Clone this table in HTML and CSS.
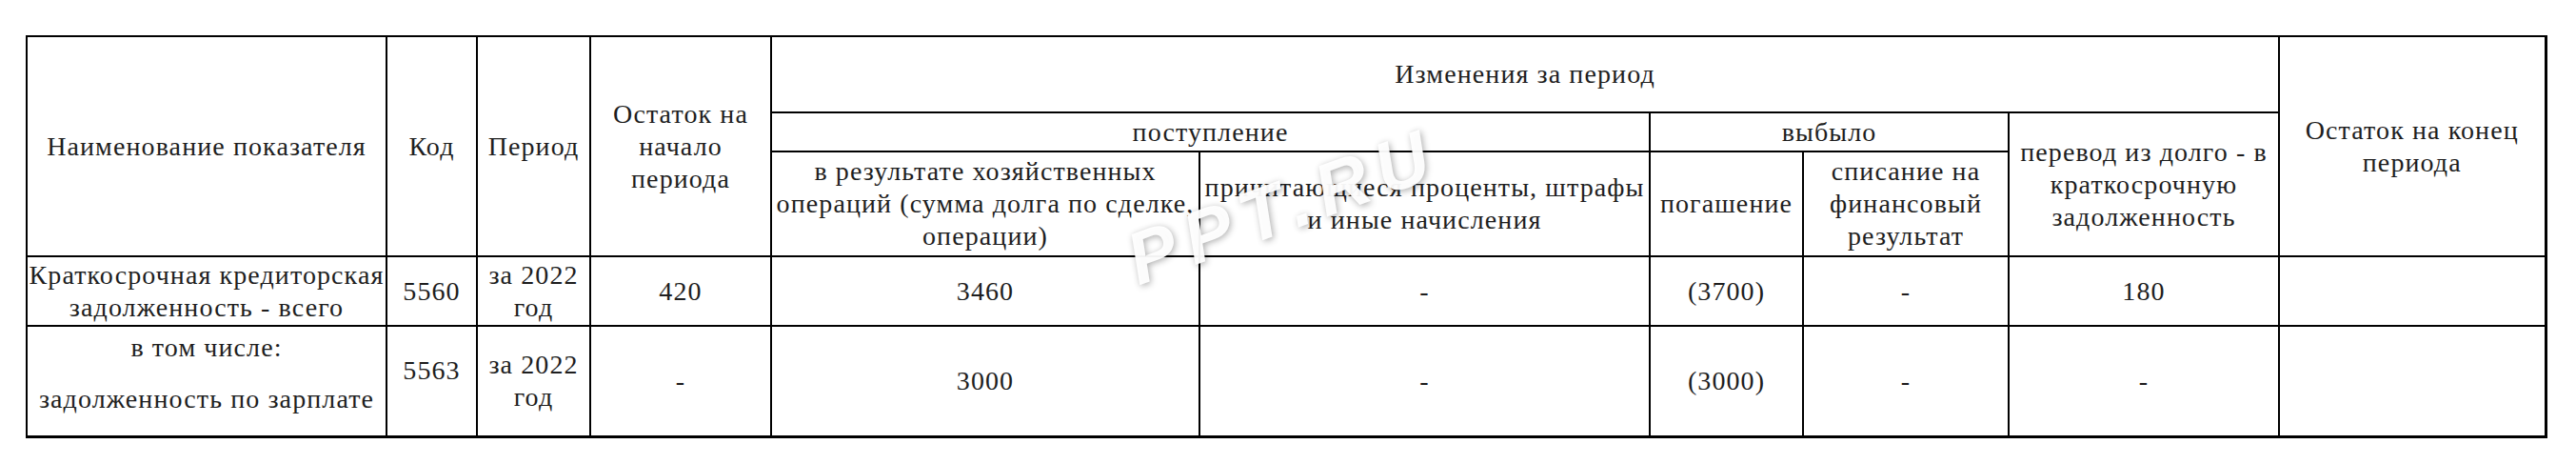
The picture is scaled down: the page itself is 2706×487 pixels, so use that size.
FILE: index.html
```html
<!DOCTYPE html>
<html lang="ru">
<head>
<meta charset="utf-8">
<link rel="stylesheet" href="styles.css">
</head>
<body>
<div class="page">
  <table class="report">
    <colgroup>
      <col class="c-name"><col class="c-code"><col class="c-period"><col class="c-start">
      <col class="c-ops"><col class="c-fines"><col class="c-repay"><col class="c-write">
      <col class="c-move"><col class="c-end">
    </colgroup>
    <thead>
      <tr class="h1">
        <th rowspan="3">Наименование показателя</th>
        <th rowspan="3">Код</th>
        <th rowspan="3">Период</th>
        <th rowspan="3">Остаток на<br>начало<br>периода</th>
        <th colspan="5">Изменения за период</th>
        <th rowspan="3">Остаток на конец<br>периода</th>
      </tr>
      <tr class="h2">
        <th colspan="2">поступление</th>
        <th colspan="2">выбыло</th>
        <th rowspan="2">перевод из долго - в<br>краткосрочную<br>задолженность</th>
      </tr>
      <tr class="h3">
        <th>в результате хозяйственных<br>операций (сумма долга по сделке,<br>операции)</th>
        <th>причитающиеся проценты, штрафы<br>и иные начисления</th>
        <th>погашение</th>
        <th>списание на<br>финансовый<br>результат</th>
      </tr>
    </thead>
    <tbody>
      <tr class="r1">
        <td>Краткосрочная кредиторская<br>задолженность - всего</td>
        <td>5560</td>
        <td>за 2022<br>год</td>
        <td>420</td>
        <td>3460</td>
        <td>-</td>
        <td>(3700)</td>
        <td>-</td>
        <td>180</td>
        <td></td>
      </tr>
      <tr class="r2">
        <td class="name-up"><div class="sub">в том числе:</div><div>задолженность по зарплате</div></td>
        <td class="code-up">5563</td>
        <td>за 2022<br>год</td>
        <td>-</td>
        <td>3000</td>
        <td>-</td>
        <td>(3000)</td>
        <td>-</td>
        <td>-</td>
        <td></td>
      </tr>
    </tbody>
  </table>
  <div class="watermark">PPT.RU</div>
</div>
</body>
</html>
```

FILE: styles.css
```css
html, body {
  margin: 0;
  padding: 0;
  background: #ffffff;
}

.page {
  position: relative;
  padding: 37px 0 0 27px;
}

.report {
  border-collapse: collapse;
  table-layout: fixed;
  width: 2647px;
  font-family: "Liberation Serif", "Times New Roman", serif;
  font-size: 28px;
  letter-spacing: 1.1px;
  line-height: 34px;
  color: #1e1e1e;
  border-right: 3px solid #000;
  border-bottom: 3px solid #000;
}

.report th,
.report td {
  border: 2px solid #000;
  padding: 0 1px;
  text-align: center;
  vertical-align: middle;
  font-weight: normal;
  white-space: nowrap;
}

.c-name { width: 378px; }
.c-code { width: 95px; }
.c-period { width: 119px; }
.c-start { width: 190px; }
.c-ops { width: 450px; }
.c-fines { width: 473px; }
.c-repay { width: 161px; }
.c-write { width: 216px; }
.c-move { width: 284px; }
.c-end { width: 280px; }

.h1 { height: 80px; }
.h2 { height: 41px; }
.h3 { height: 110px; }
.r1 { height: 73px; }
.r2 { height: 116px; }

.report .sub { margin-bottom: 20px; }
.report .name-up { padding-bottom: 16px; }
.report .code-up { padding-bottom: 22px; }

.watermark {
  position: absolute;
  left: 1200px;
  top: 234px;
  font-family: "Liberation Sans", Arial, sans-serif;
  font-weight: bold;
  font-style: italic;
  font-size: 77px;
  line-height: 77px;
  letter-spacing: 11px;
  color: rgba(255, 255, 255, 0.95);
  text-shadow: 1px 2px 7px rgba(0, 0, 0, 0.32);
  transform: rotate(-20deg);
  transform-origin: 0 100%;
  pointer-events: none;
}
```
